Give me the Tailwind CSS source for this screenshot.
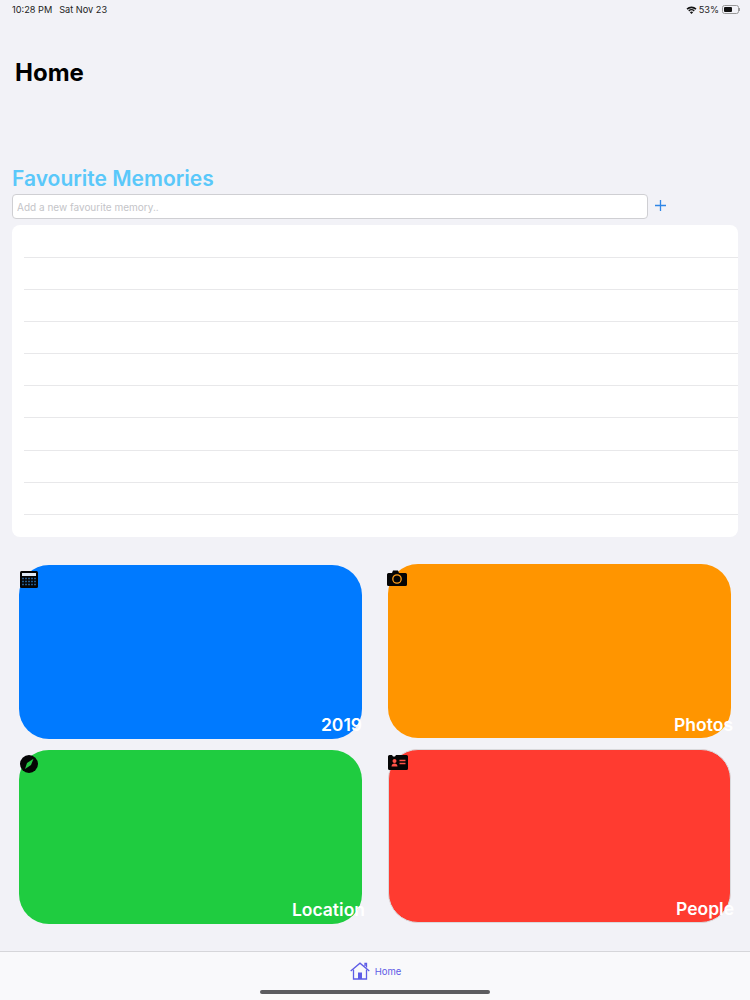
<!DOCTYPE html>
<html lang="en">
<head>
  <meta charset="UTF-8" />
  <meta name="viewport" content="width=device-width, initial-scale=1" />
  <title>Home</title>
  <script src="https://cdn.jsdelivr.net/npm/@tailwindcss/browser@4"></script>
</head>
<body class="bg-[#f2f2f7] font-['Inter',sans-serif] w-[750px] h-[1000px] overflow-hidden flex flex-col">

  <!-- Status bar -->
  <div class="h-[17px] pt-[3px] pl-3 pr-[10px] flex justify-between items-center text-[9.2px] text-[#222]">
    <div class="flex gap-[7px]">
      <span>10:28 PM</span>
      <span>Sat Nov 23</span>
    </div>
    <div class="flex items-center gap-[3px]">
      <svg width="11" height="8" viewBox="0 0 11 8" fill="#111"><path d="M5.500 8 3.900 6.200a2.300 2.300 0 0 1 3.200 0z"/><path d="M3.200 5.400 2.300 4.400a4.600 4.600 0 0 1 6.400 0l-.9 1a3.400 3.400 0 0 0-4.600 0z"/><path d="M1.600 3.700.5 2.600a7.200 7.200 0 0 1 10 0L9.400 3.700a5.800 5.800 0 0 0-7.800 0z"/></svg>
      <span class="-mr-px -ml-px">53%</span>
      <div class="flex items-center ml-px">
        <div class="w-[17px] h-[9px] rounded-[2.5px] border border-[#999] p-px">
          <div class="w-[8px] h-full bg-[#111] rounded-[1px]"></div>
        </div>
        <div class="w-px h-[3px] bg-[#999]"></div>
      </div>
    </div>
  </div>

  <!-- Title -->
  <h1 class="mt-[40px] ml-[15px] text-[24px] leading-[32px] font-bold text-black">Home</h1>

  <!-- Favourite memories -->
  <h2 class="mt-[76px] ml-3 text-[21px] leading-[28px] font-semibold text-[#5ac8fa]">Favourite Memories</h2>
  <div class="mt-[1px] ml-3 flex items-center">
    <input class="w-[636px] h-[25px] bg-white border border-[#cfcfd3] rounded-[4px] px-[4px] text-[10px] placeholder:text-[#c4c4c8] outline-none" placeholder="Add a new favourite memory.." />
    <svg class="ml-[7px] -mt-[2px]" width="11" height="11" viewBox="0 0 11 11" stroke="#2f86e6" stroke-width="1.300"><path d="M5.500 0v11M0 5.500h11"/></svg>
  </div>

  <div class="mt-[6px] ml-3 w-[726px] h-[312px] bg-white rounded-lg pl-3 pt-[32px] flex flex-col gap-[31.1px]">
    <div class="h-px bg-[#e8e8ea]"></div>
    <div class="h-px bg-[#e8e8ea]"></div>
    <div class="h-px bg-[#e8e8ea]"></div>
    <div class="h-px bg-[#e8e8ea]"></div>
    <div class="h-px bg-[#e8e8ea]"></div>
    <div class="h-px bg-[#e8e8ea]"></div>
    <div class="h-px bg-[#e8e8ea]"></div>
    <div class="h-px bg-[#e8e8ea]"></div>
    <div class="h-px bg-[#e8e8ea]"></div>
  </div>

  <!-- Cards -->
  <div class="mt-[28px] ml-[19px] grid grid-cols-[343px_343px] gap-x-[26px] gap-y-[11px] font-semibold text-white text-[17.5px]">

    <div class="relative h-[174px] rounded-[30px] bg-[#007aff] flex items-end justify-end pb-[1px]">
      <span>2019</span>
      <svg class="absolute left-[1px] top-[6px]" width="18" height="17" viewBox="0 0 18 17">
        <rect width="18" height="17" rx="1.500" fill="#050505"/>
        <rect x="2" y="2" width="14" height="3" fill="#dfe9f5"/>
        <path d="M2 7.500h14M2 10.500h14M2 13.500h14" stroke="#245a8c" stroke-width="1.400" stroke-dasharray="2 1"/>
      </svg>
    </div>

    <div class="relative -mt-px h-[174px] rounded-[30px] bg-[#ff9500] flex items-end justify-end pb-0">
      <span class="-mr-[2px]">Photos</span>
      <svg class="absolute -left-[1px] top-[6px]" width="20" height="16" viewBox="0 0 20 16">
        <path d="M1.500 3H5l1-2.500h5L12 3h6.500A1.500 1.500 0 0 1 20 4.500v10a1.500 1.500 0 0 1-1.500 1.500h-17A1.500 1.500 0 0 1 0 14.500v-10A1.500 1.500 0 0 1 1.500 3z" fill="#050505"/>
        <circle cx="10" cy="9" r="4.200" fill="none" stroke="#ff9f1a" stroke-width="1.300"/>
      </svg>
    </div>

    <div class="relative h-[174px] rounded-[30px] bg-[#1fcc40] flex items-end justify-end pb-[1px]">
      <span class="-mr-[3px]">Location</span>
      <svg class="absolute left-[1px] top-[5px]" width="18" height="18" viewBox="0 0 18 18">
        <circle cx="9" cy="9" r="9" fill="#050505"/>
        <path d="M13.500 3.800 11 10 5 14l2-6z" fill="#25c644"/>
      </svg>
    </div>

    <div class="relative -mt-px h-[174px] rounded-[30px] bg-[#ff3b30] flex items-end justify-end border border-[#d9d9dc]">
      <span class="-mr-[4px]">People</span>
      <svg class="absolute -left-[1px] top-[5px]" width="20" height="16" viewBox="0 0 20 16">
        <path d="M0 1.500A1.500 1.500 0 0 1 1.500 0H4l1 1.500h2L8 0h10.500A1.500 1.500 0 0 1 20 1.500v12a1.500 1.500 0 0 1-1.500 1.500h-17A1.500 1.500 0 0 1 0 13.500z" fill="#050505"/>
        <circle cx="6.500" cy="6" r="2" fill="#ff5348"/>
        <path d="M3.500 11.500c0-2 1.300-3 3-3s3 1 3 3z" fill="#ff5348"/>
        <path d="M11.500 5.500h6M11.500 8.500h6" stroke="#ff5348" stroke-width="1.300"/>
      </svg>
    </div>
  </div>

  <!-- Tab bar -->
  <div class="relative mt-auto h-[49px] bg-[#f9f9fb] border-t border-[#d6d6da] flex items-start justify-center pt-[10px] gap-[5px]">
    <svg class="ml-[1px]" width="20" height="18" viewBox="0 0 20 18" fill="none" stroke="#5e5ce6" stroke-width="1.300">
      <path d="M.7 9 10 1.200 19.300 9"/>
      <path d="M3.500 7.500V17h13V7.500"/>
      <path d="M15 4V1.500h1.500v4"/>
      <rect x="8" y="10.500" width="4" height="6.500" fill="#5e5ce6" stroke="none"/>
    </svg>
    <span class="text-[9.5px] leading-[20px] text-[#5e5ce6]">Home</span>
    <div class="absolute left-[260px] top-[38px] w-[230px] h-[4px] rounded-full bg-[#5c5c60]"></div>
  </div>
</body>
</html>
